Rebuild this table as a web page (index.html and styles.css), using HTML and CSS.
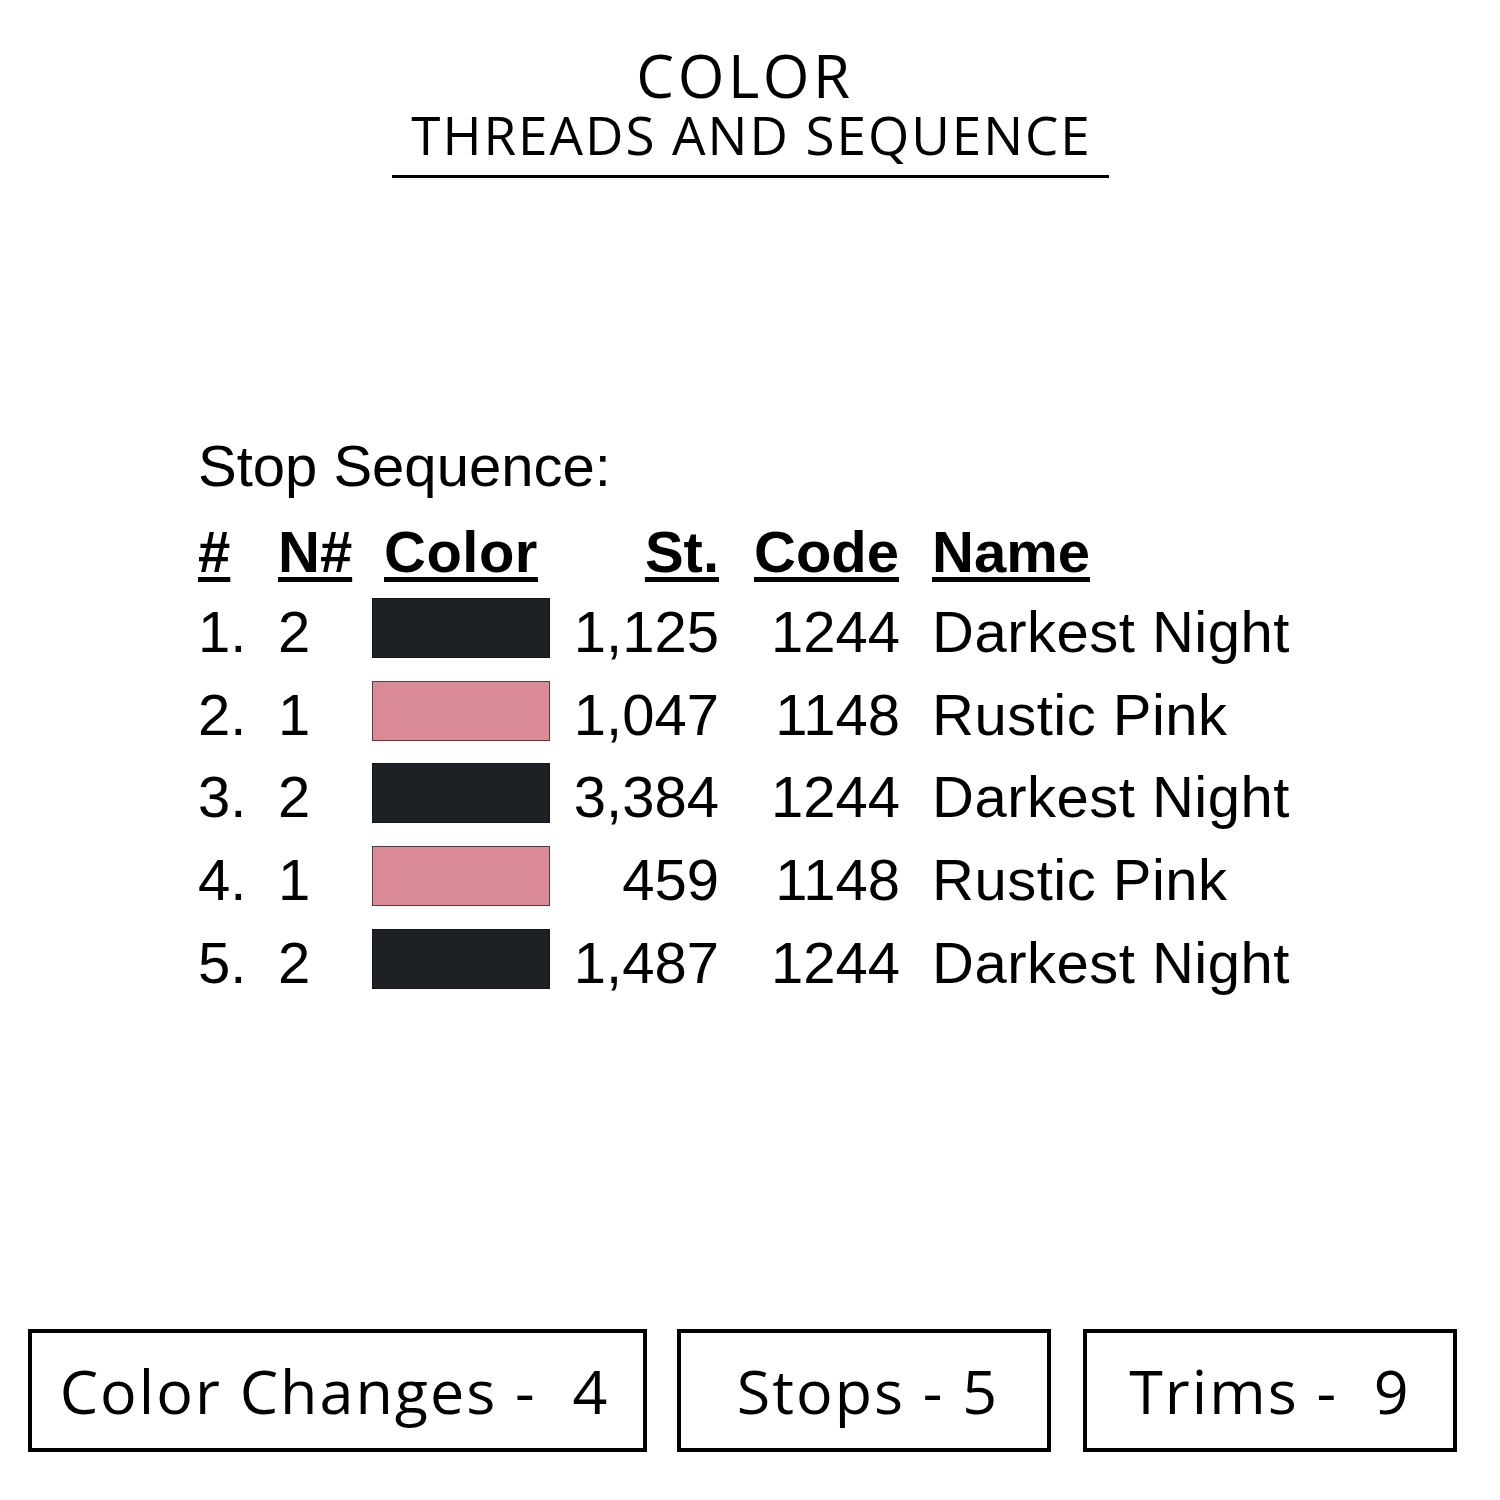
FILE: index.html
```html
<!DOCTYPE html>
<html lang="en">
<head>
<meta charset="utf-8">
<title>Color Threads and Sequence</title>
<link rel="stylesheet" href="styles.css">
</head>
<body>
<div class="page">
  <header class="title">
    <div class="title-inner">
      <div class="title-main">COLOR</div>
      <div class="title-sub">THREADS AND SEQUENCE</div>
    </div>
  </header>

  <section class="sequence">
    <div class="seq-label">Stop Sequence:</div>
    <div class="seq-table">
      <div class="th c-num"><span>#</span></div>
      <div class="th c-n"><span>N#</span></div>
      <div class="th c-color"><span>Color</span></div>
      <div class="th c-st"><span>St.</span></div>
      <div class="th c-code"><span>Code</span></div>
      <div class="th c-name"><span>Name</span></div>

      <div class="td c-num">1.</div>
      <div class="td c-n">2</div>
      <div class="td c-color"><div class="swatch dark"></div></div>
      <div class="td c-st">1,125</div>
      <div class="td c-code">1244</div>
      <div class="td c-name">Darkest Night</div>

      <div class="td c-num">2.</div>
      <div class="td c-n">1</div>
      <div class="td c-color"><div class="swatch pink"></div></div>
      <div class="td c-st">1,047</div>
      <div class="td c-code">1148</div>
      <div class="td c-name">Rustic Pink</div>

      <div class="td c-num">3.</div>
      <div class="td c-n">2</div>
      <div class="td c-color"><div class="swatch dark"></div></div>
      <div class="td c-st">3,384</div>
      <div class="td c-code">1244</div>
      <div class="td c-name">Darkest Night</div>

      <div class="td c-num">4.</div>
      <div class="td c-n">1</div>
      <div class="td c-color"><div class="swatch pink"></div></div>
      <div class="td c-st">459</div>
      <div class="td c-code">1148</div>
      <div class="td c-name">Rustic Pink</div>

      <div class="td c-num">5.</div>
      <div class="td c-n">2</div>
      <div class="td c-color"><div class="swatch dark"></div></div>
      <div class="td c-st">1,487</div>
      <div class="td c-code">1244</div>
      <div class="td c-name">Darkest Night</div>
    </div>
  </section>

  <footer class="stats">
    <div class="stat stat-wide">Color Changes -&nbsp;&nbsp;4</div>
    <div class="stat">Stops - 5</div>
    <div class="stat">Trims -&nbsp;&nbsp;9</div>
  </footer>
</div>
</body>
</html>
```

FILE: styles.css
```css
html, body {
  margin: 0;
  padding: 0;
  background: #ffffff;
}

.page {
  width: 1500px;
  height: 1500px;
  display: flex;
  flex-direction: column;
  color: #000;
}

/* Title */
.title {
  display: flex;
  justify-content: center;
  padding-top: 45px;
  font-family: "Open Sans", "Liberation Sans", sans-serif;
}

.title-inner {
  display: flex;
  flex-direction: column;
  align-items: center;
  padding: 0 19px 10px 19px;
  border-bottom: 3px solid #000;
  margin-left: 1px;
}

.title-main {
  font-size: 60px;
  line-height: 60px;
  font-weight: 500;
  letter-spacing: 3.6px;
  margin-right: 11px;
}

.title-sub {
  font-size: 53px;
  line-height: 60px;
  font-weight: 400;
  letter-spacing: 1.95px;
  margin-right: -2px;
}

/* Sequence table */
.sequence {
  margin-top: 258px;
  padding-left: 198px;
  font-family: "Liberation Sans", Arial, sans-serif;
  font-size: 58px;
  color: #000;
}

.seq-label {
  line-height: 60px;
}

.seq-table {
  margin-top: 16px;
  display: grid;
  grid-template-columns: 80px 94px 178px 169px 181px auto;
  grid-auto-rows: 82.7px;
  grid-template-rows: 79px;
}

.th {
  font-weight: bold;
  line-height: 80px;
  white-space: nowrap;
}

.th span {
  text-decoration: underline;
  text-decoration-thickness: 5px;
  text-underline-offset: 5px;
}

.td {
  line-height: 82.7px;
  white-space: nowrap;
}

.td.c-name {
  letter-spacing: 0.5px;
}

.c-st, .c-code {
  text-align: right;
}

.th.c-color {
  padding-left: 12px;
}

.th.c-color span {
  letter-spacing: 0.5px;
}

.c-name {
  padding-left: 32px;
}

.th.c-code {
  padding-right: 1px;
}

.swatch {
  width: 178px;
  height: 60px;
  margin-top: 7px;
  box-sizing: border-box;
  border: 1.5px solid;
}

.swatch.dark {
  background: #1d2025;
  border-color: #121418;
}

.swatch.pink {
  background: #d98a94;
  border-color: #5a3a40;
}

/* Stats */
.stats {
  margin-top: auto;
  margin-bottom: 48px;
  display: flex;
  gap: 30px;
  padding-left: 28px;
  font-family: "Open Sans", "Liberation Sans", sans-serif;
}

.stat {
  box-sizing: border-box;
  width: 374px;
  height: 123px;
  border: 4px solid #000;
  display: flex;
  align-items: center;
  justify-content: center;
  font-size: 61px;
  line-height: 1;
  letter-spacing: 2px;
  white-space: nowrap;
}

.stat-wide {
  width: 619px;
  padding-right: 6px;
}

.stat + .stat:not(.stat-wide) {
  padding-left: 8px;
}

.stat + .stat + .stat {
  margin-left: 2px;
  padding-left: 0;
}
```
